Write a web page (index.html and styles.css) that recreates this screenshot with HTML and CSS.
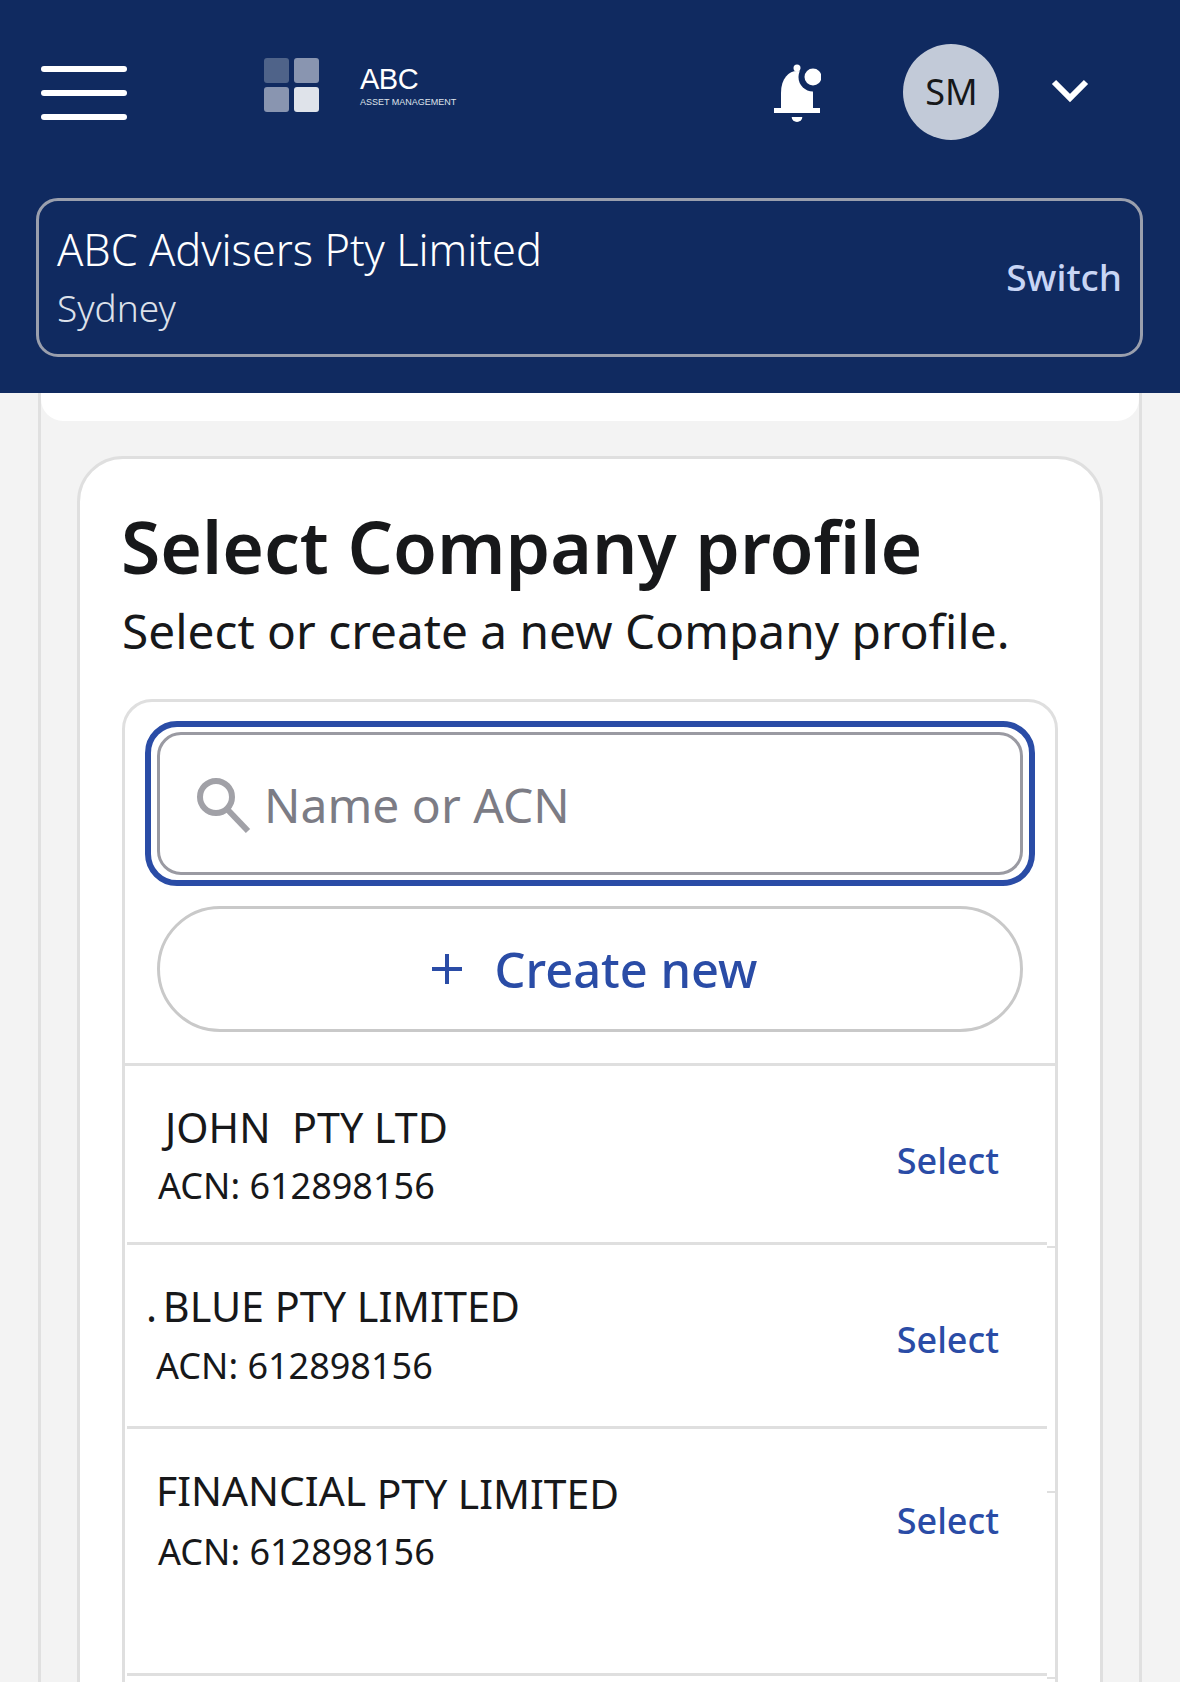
FILE: index.html
```html
<!DOCTYPE html>
<html lang="en">
<head>
    <meta charset="UTF-8">
    <meta name="viewport" content="width=device-width, initial-scale=1.0">
    <title>Select Company profile</title>
    <link rel="stylesheet" href="styles.css">
</head>
<body>
    <div class="page">
        <header class="header">
            <div class="topbar">
                <div class="hamburger"><span></span><span></span><span></span></div>
                <div class="logo">
                    <div class="logo-mark"><i class="sq1"></i><i class="sq2"></i><i class="sq2"></i><i class="sq3"></i></div>
                    <div class="logo-text">
                        <div class="logo-name">ABC</div>
                        <div class="logo-sub">ASSET MANAGEMENT</div>
                    </div>
                </div>
                <svg class="bell" width="47" height="58" viewBox="0 0 47 58">
                    <circle cx="23" cy="4" r="3.5" fill="#fff"/>
                    <path d="M7 45V29C7 14 15 7 23 7C31 7 39 14 39 29V45Z" fill="#fff"/>
                    <rect x="0" y="44" width="46" height="5" fill="#fff"/>
                    <path d="M17.7 53h10.6a5.3 5 0 0 1-10.6 0Z" fill="#fff"/>
                    <circle cx="39" cy="13" r="14.5" fill="#102a60"/>
                    <circle cx="39" cy="13" r="8.5" fill="#fff"/>
                </svg>
                <div class="avatar">SM</div>
                <svg class="chevron" width="38" height="26" viewBox="0 0 38 26">
                    <path d="M3 4L19 20L35 4" fill="none" stroke="#fff" stroke-width="6"/>
                </svg>
            </div>
            <div class="switcher">
                <div>
                    <div class="switcher-name">ABC Advisers Pty Limited</div>
                    <div class="switcher-city">Sydney</div>
                </div>
                <div class="switcher-link">Switch</div>
            </div>
        </header>

        <main class="panel">
            <div class="panel-top"></div>
            <section class="card">
                <h1>Select Company profile</h1>
                <p class="subtitle">Select or create a new Company profile.</p>

                <div class="picker">
                    <div class="picker-top">
                        <div class="search-ring">
                            <div class="search">
                                <svg width="56" height="58" viewBox="0 0 56 58">
                                    <circle cx="21" cy="21" r="16" fill="none" stroke="#a1a1a7" stroke-width="6"/>
                                    <path d="M32 33L53 55" fill="none" stroke="#a1a1a7" stroke-width="6"/>
                                </svg>
                                <span>Name or ACN</span>
                            </div>
                        </div>
                        <div class="create-btn">
                            <svg width="30" height="30" viewBox="0 0 30 30">
                                <path d="M15 0V30M0 15H30" stroke="#2a4ca6" stroke-width="4"/>
                            </svg>
                            <span>Create new</span>
                        </div>
                    </div>

                    <div class="row row-one">
                        <div>
                            <div class="name name-shift">JOHN&nbsp; PTY LTD</div>
                            <div class="acn">ACN: 612898156</div>
                        </div>
                        <div class="select">Select</div>
                    </div>
                    <div class="row row-two">
                        <div>
                            <div class="name name-dot"><span class="dot">. </span>BLUE PTY LIMITED</div>
                            <div class="acn acn-left">ACN: 612898156</div>
                        </div>
                        <div class="select">Select</div>
                    </div>
                    <div class="row row-three">
                        <div>
                            <div class="name name-left"><span class="name-raised">FINANCIAL</span> PTY LIMITED</div>
                            <div class="acn">ACN: 612898156</div>
                        </div>
                        <div class="select">Select</div>
                    </div>
                </div>
            </section>
        </main>
    </div>
</body>
</html>
```

FILE: styles.css
```css
* {
    margin: 0;
    padding: 0;
    box-sizing: border-box;
}
body {
    font-family: "Noto Sans", "Open Sans", sans-serif;
    background: #f3f3f3;
    color: #17181a;
}
.page {
    height: 100vh;
    overflow: hidden;
}

/* header */
.header {
    height: 393px;
    background: #102a60;
}
.topbar {
    height: 198px;
    display: flex;
    align-items: flex-start;
}
.hamburger {
    margin: 66px 0 0 41px;
    width: 86px;
    display: flex;
    flex-direction: column;
    gap: 18px;
}
.hamburger span {
    height: 6px;
    background: #fff;
    border-radius: 3px;
}
.logo {
    display: flex;
    margin: 58px 0 0 137px;
    gap: 41px;
}
.logo-mark {
    display: grid;
    grid-template-columns: 25px 25px;
    grid-auto-rows: 25px;
    gap: 4px 5px;
}
.logo-mark i {
    border-radius: 3px;
}
.sq1 { background: #4f6389; }
.sq2 { background: #8995b0; }
.sq3 { background: #dfe3ea; }
.logo-text {
    font-family: "Liberation Sans", Arial, sans-serif;
    color: #fff;
}
.logo-name {
    font-size: 29px;
    line-height: 32px;
    margin-top: 5px;
    letter-spacing: -0.5px;
}
.logo-sub {
    font-size: 9px;
    line-height: 12px;
    margin-top: 1px;
    color: #dfe3ea;
}
.bell {
    margin: 64px 0 0 318px;
}
.avatar {
    width: 96px;
    height: 96px;
    margin: 44px 0 0 82px;
    border-radius: 50%;
    background: #c2cad8;
    display: flex;
    align-items: center;
    justify-content: center;
    font-size: 36px;
    padding-bottom: 2px;
}
.chevron {
    margin: 78px 0 0 52px;
}
.switcher {
    width: 1107px;
    height: 159px;
    margin-left: 36px;
    border: 3px solid #9a9fad;
    border-radius: 22px;
    padding: 0 18px;
    display: flex;
    align-items: center;
    justify-content: space-between;
}
.switcher-name {
    font-size: 43.3px;
    font-weight: 350;
    line-height: 58px;
    margin-top: -3px;
    color: #fff;
}
.switcher-city {
    font-size: 37px;
    font-weight: 350;
    line-height: 48px;
    margin-top: 5px;
    color: #dde1ea;
}
.switcher-link {
    font-size: 37px;
    font-weight: 500;
    color: #c8d5f5;
    margin-bottom: 2px;
}

/* content */
.panel {
    width: 1104px;
    margin-left: 38px;
    border-left: 3px solid #e0e0e0;
    border-right: 3px solid #e0e0e0;
    min-height: 1289px;
}
.panel-top {
    height: 28px;
    background: #fff;
    border-radius: 0 0 22px 22px;
}
.card {
    width: 1026px;
    margin: 35px 0 0 36px;
    min-height: 1300px;
    background: #fff;
    border: 3px solid #dfdfdf;
    border-radius: 46px;
    padding: 42px 41px 0;
}
h1 {
    font-size: 71.4px;
    font-weight: 600;
    line-height: 92px;
}
.subtitle {
    font-size: 47.8px;
    line-height: 64px;
    margin: 6px 0 0 1px;
}
.picker {
    width: 936px;
    min-height: 1100px;
    margin: 36px 0 0 1px;
    border: 3px solid #dfdfdf;
    border-radius: 30px;
    background: #fff;
}
.picker-top {
    padding: 19px 32px 31px;
    border-bottom: 3px solid #dfdfdf;
}
.search-ring {
    margin: 0 -12px;
    padding: 5px 6px;
    border: 6px solid #2a4ca6;
    border-radius: 32px;
}
.search {
    height: 143px;
    border: 3px solid #9a9aa2;
    border-radius: 24px;
    padding: 2px 0 0 35px;
    display: flex;
    align-items: center;
    gap: 13px;
    font-size: 48px;
    color: #7c7c85;
}
.create-btn {
    height: 126px;
    margin-top: 20px;
    padding-left: 9px;
    border: 3px solid #c9c9c9;
    border-radius: 63px;
    display: flex;
    align-items: center;
    justify-content: center;
    gap: 33px;
    font-size: 48.8px;
    font-weight: 500;
    color: #2a4ca6;
}

/* rows */
.row {
    position: relative;
    margin: 0 8px 0 2px;
    padding: 0 48px 0 31px;
    display: flex;
    justify-content: space-between;
    border-bottom: 3px solid #dfdfdf;
}
/* small ticks where the list lines meet the box edge */
.row-one::after,
.row-three::after {
    content: "";
    position: absolute;
    right: -9px;
    bottom: -6px;
    width: 9px;
    height: 2px;
    background: #dfdfdf;
}
.row-three::before {
    content: "";
    position: absolute;
    right: -9px;
    top: 62px;
    width: 9px;
    height: 2px;
    background: #dfdfdf;
}
.row-one { height: 179px; padding-top: 33px; }
.row-two { height: 184px; padding-top: 33px; }
.row-three { height: 247px; padding-top: 36px; }
.name {
    font-size: 41.3px;
    line-height: 56px;
}
.name-shift { padding-left: 7px; }
.name-dot { margin-left: -12px; }
.dot { word-spacing: -5px; }
.name-left {
    margin-left: -2px;
    font-size: 40.8px;
}
.name-raised {
    position: relative;
    top: -3px;
}
.acn {
    font-size: 36px;
    line-height: 48px;
    margin-top: 7px;
}
.acn-left { margin: 8px 0 0 -2px; }
.select {
    font-size: 36px;
    font-weight: 500;
    line-height: 48px;
    color: #2a4ca6;
}
.row-one .select { margin-top: 38px; }
.row-two .select { margin-top: 38px; }
.row-three .select { margin-top: 32px; }
```
